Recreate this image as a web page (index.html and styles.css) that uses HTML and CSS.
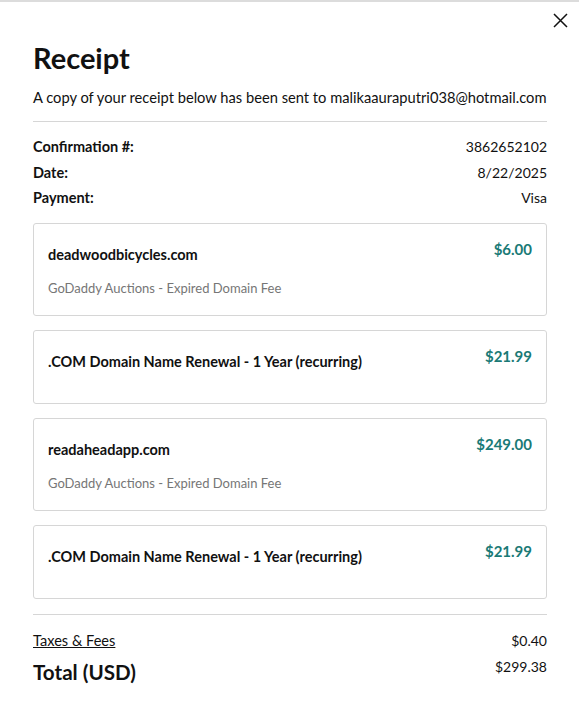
FILE: index.html
```html
<!DOCTYPE html>
<html lang="en">
<head>
    <meta charset="UTF-8">
    <meta name="viewport" content="width=device-width, initial-scale=1.0">
    <title>Receipt</title>
    <link rel="stylesheet" href="styles.css">
</head>
<body>
    <div class="modal">
        <button type="button" class="close" aria-label="Close">
            <svg width="15" height="15" viewBox="0 0 15 15"><path d="M1 1L14 14M14 1L1 14" stroke="#111" stroke-width="1.5" fill="none"/></svg>
        </button>

        <h1>Receipt</h1>
        <p class="intro">A copy of your receipt below has been sent to malikaauraputri038@hotmail.com</p>

        <div class="details">
            <div class="row"><span class="label">Confirmation #:</span><span>3862652102</span></div>
            <div class="row"><span class="label">Date:</span><span>8/22/2025</span></div>
            <div class="row"><span class="label">Payment:</span><span>Visa</span></div>
        </div>

        <div class="items">
            <div class="item">
                <div class="item-info">
                    <div class="item-name">deadwoodbicycles.com</div>
                    <div class="item-desc">GoDaddy Auctions - Expired Domain Fee</div>
                </div>
                <div class="item-price">$6.00</div>
            </div>
            <div class="item item-plain">
                <div class="item-info">
                    <div class="item-name">.COM Domain Name Renewal - 1 Year (recurring)</div>
                </div>
                <div class="item-price">$21.99</div>
            </div>
            <div class="item">
                <div class="item-info">
                    <div class="item-name">readaheadapp.com</div>
                    <div class="item-desc">GoDaddy Auctions - Expired Domain Fee</div>
                </div>
                <div class="item-price">$249.00</div>
            </div>
            <div class="item item-plain">
                <div class="item-info">
                    <div class="item-name">.COM Domain Name Renewal - 1 Year (recurring)</div>
                </div>
                <div class="item-price">$21.99</div>
            </div>
        </div>

        <div class="totals">
            <div class="row"><a href="#" class="taxes">Taxes &amp; Fees</a><span>$0.40</span></div>
            <div class="row total"><span class="total-label">Total (USD)</span><span>$299.38</span></div>
        </div>
    </div>
</body>
</html>
```

FILE: styles.css
```css
body {
    margin: 0;
    font-family: Lato, "Noto Sans", sans-serif;
    color: #111;
    background-color: white;
}

.modal {
    border-top: 2px solid #dcdcdc;
    padding: 0 32px 40px 33px;
    position: relative;
}

.close {
    position: absolute;
    top: 11px;
    right: 11px;
    background: none;
    border: none;
    padding: 0;
    cursor: pointer;
    line-height: 0;
}

h1 {
    margin: 0;
    padding-top: 38px;
    font-size: 29px;
    line-height: 36px;
    font-weight: 700;
}

.intro {
    margin: 11px 0 0;
    font-size: 14.7px;
    line-height: 20px;
    white-space: nowrap;
}

.details {
    margin-top: 14px;
    border-top: 1px solid #d6d6d6;
    padding-top: 15px;
}

.row {
    display: flex;
    justify-content: space-between;
    align-items: baseline;
    font-size: 14px;
    line-height: 20px;
    margin-bottom: 5.5px;
}

.label {
    font-size: 14.5px;
    font-weight: 700;
}

.items {
    margin-top: 15px;
    display: flex;
    flex-direction: column;
    gap: 14px;
}

.item {
    display: flex;
    justify-content: space-between;
    border: 1px solid #d6d6d6;
    border-radius: 3px;
    padding: 16px 14px 17px 14px;
}

.item-plain {
    padding-bottom: 31px;
}

.item-name {
    margin-top: 5px;
    font-size: 14.5px;
    line-height: 20px;
    font-weight: 700;
}

.item-desc {
    margin-top: 13px;
    font-size: 13px;
    line-height: 20px;
    color: #767676;
}

.item-price {
    font-size: 15px;
    line-height: 18px;
    font-weight: 700;
    color: #1a7a76;
}

.totals {
    margin-top: 15px;
    border-top: 1px solid #d6d6d6;
    padding-top: 16px;
}

.taxes {
    font-size: 14.6px;
    color: #111;
    text-decoration: underline;
}

.total {
    align-items: flex-start;
}

.total-label {
    font-size: 20.6px;
    line-height: 30px;
    font-weight: 700;
}
```
